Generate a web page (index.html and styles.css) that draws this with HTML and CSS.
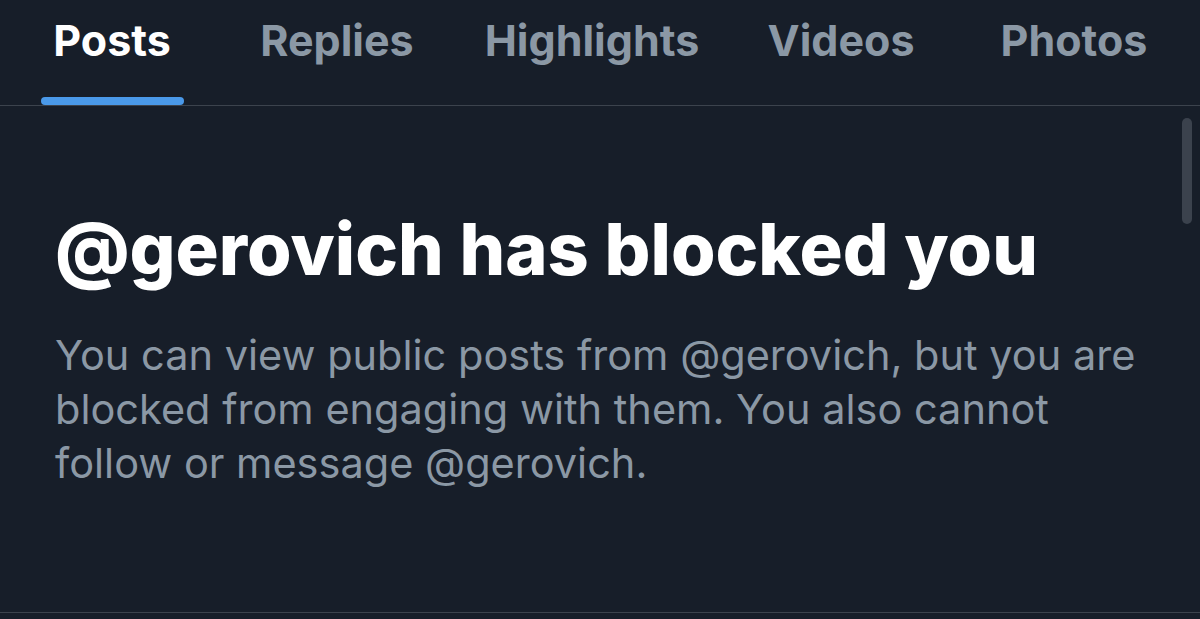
FILE: index.html
```html
<!DOCTYPE html>
<html lang="en">
<head>
<meta charset="utf-8">
<title>Blocked</title>
<link rel="stylesheet" href="styles.css">
</head>
<body>
<div class="page">
  <nav class="tabs">
    <div class="tab active"><span class="tab-label">Posts</span><span class="indicator"></span></div>
    <div class="tab"><span class="tab-label">Replies</span></div>
    <div class="tab"><span class="tab-label">Highlights</span></div>
    <div class="tab"><span class="tab-label">Videos</span></div>
    <div class="tab"><span class="tab-label">Photos</span></div>
  </nav>
  <main class="content">
    <section class="blocked">
      <h1 class="title">@gerovich has blocked you</h1>
      <p class="message">You can view public posts from @gerovich, but you are blocked from engaging with them. You also cannot follow or message @gerovich.</p>
    </section>
    <div class="scrollbar"></div>
  </main>
</div>
</body>
</html>
```

FILE: styles.css
```css
html, body {
  margin: 0;
  padding: 0;
  background: #171e29;
}
body {
  font-family: Inter, "Noto Sans", sans-serif;
  width: 1200px;
  height: 619px;
  overflow: hidden;
}
.page {
  display: flex;
  flex-direction: column;
  height: 619px;
}
.tabs {
  display: grid;
  grid-template-columns: 224px 226px 284px 214px 252px;
  height: 105px;
  border-bottom: 1px solid #3c434d;
}
.tab {
  position: relative;
  display: flex;
  justify-content: center;
  padding-top: 14px;
}
.tab-label {
  font-size: 43px;
  font-weight: 700;
  color: #8b98a5;
  line-height: 52px;
}
.tab.active .tab-label {
  color: #ffffff;
}
.indicator {
  position: absolute;
  left: 41px;
  width: 143px;
  bottom: 0;
  height: 8px;
  border-radius: 4px;
  background: #4a99e9;
}
.content {
  position: relative;
  flex: 0 0 506px;
  border-bottom: 1px solid #3c434d;
}
.blocked {
  padding: 103px 0 0 55px;
}
.title {
  margin: 0;
  font-size: 72px;
  font-weight: 800;
  color: #ffffff;
  line-height: 80px;
}
.message {
  width: 1095px;
  margin: 39px 0 0;
  font-size: 41.5px;
  font-weight: 400;
  color: #8b98a5;
  line-height: 54px;
}
.scrollbar {
  position: absolute;
  right: 8px;
  top: 12px;
  width: 10px;
  height: 106px;
  border-radius: 5px;
  background: #3b424d;
}
```
